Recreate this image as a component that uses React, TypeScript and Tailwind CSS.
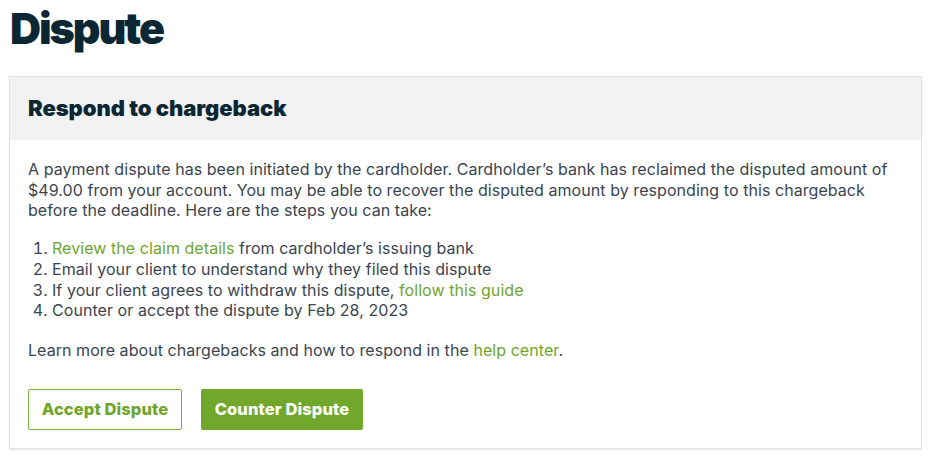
import React from "react";

export default function App() {
  const green = "text-[#6fa52b]";
  return (
    <div className="w-[932px] h-[456px] bg-white font-['Inter',sans-serif] overflow-hidden">
      <div className="px-[9px] pt-[2px]">
        <h1 className="pl-[1px] text-[43px] leading-[52px] font-black tracking-[-2.1px] text-[#0b2733]">
          Dispute
        </h1>
        <div className="mt-[22px] w-[913px] border border-[#e3e3e3] shadow-[0_1px_1px_rgba(0,0,0,0.08)]">
          <div className="bg-[#f2f2f2] h-[63px] flex items-center px-[18px]">
            <h2 className="text-[22px] font-black text-[#0b2733] tracking-[-0.05px]">
              Respond to chargeback
            </h2>
          </div>
          <div className="px-[18px] pt-[19px] pb-[18px] text-[16px] leading-[20.7px] tracking-[0.06px] text-[#3a4550]">
            <p>
              A payment dispute has been initiated by the cardholder. Cardholder’s bank has reclaimed the disputed amount of
              $49.00 from your account. You may be able to recover the disputed amount by responding to this chargeback
              before the deadline. Here are the steps you can take:
            </p>
            <ol className="list-decimal pl-[24px] mt-[17px]">
              <li>
                <span className={green}>Review the claim details</span> from cardholder’s issuing bank
              </li>
              <li>Email your client to understand why they filed this dispute</li>
              <li>
                If your client agrees to withdraw this dispute, <span className={green}>follow this guide</span>
              </li>
              <li>Counter or accept the dispute by Feb 28, 2023</li>
            </ol>
            <p className="mt-[19px]">
              Learn more about chargebacks and how to respond in the <span className={green}>help center</span>.
            </p>
            <div className="flex gap-[19px] mt-[28px]">
              <button className="h-[41px] w-[154px] border border-[#7aad3a] rounded-[2px] text-[#6fa52b] font-extrabold text-[16.5px] tracking-[0.1px] bg-white">
                Accept Dispute
              </button>
              <button className="h-[41px] w-[162px] rounded-[2px] bg-[#71a72a] text-white font-extrabold text-[16.5px] tracking-[0.1px]">
                Counter Dispute
              </button>
            </div>
          </div>
        </div>
      </div>
    </div>
  );
}
